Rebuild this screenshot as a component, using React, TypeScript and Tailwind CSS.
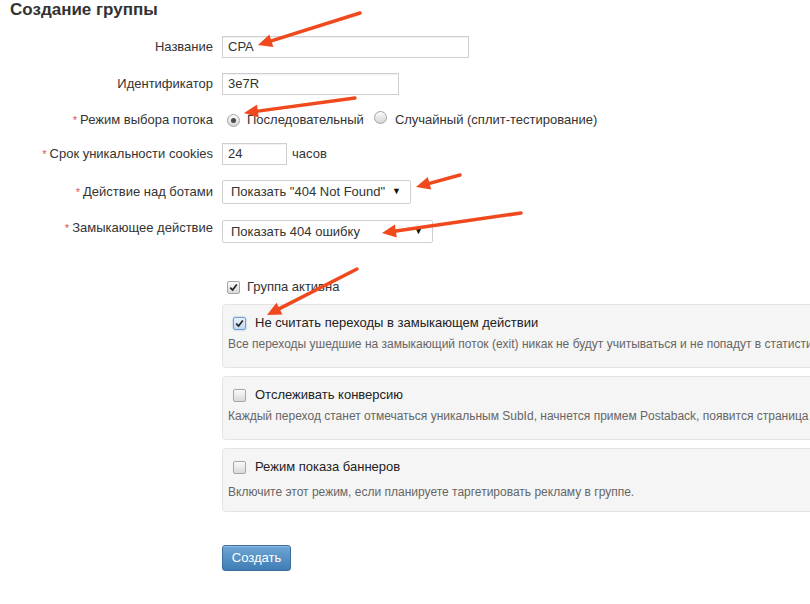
import React from "react";

function Checkbox({ checked, focused }: { checked?: boolean; focused?: boolean }) {
  return (
    <span
      className={
        "relative inline-flex h-[13px] w-[13px] shrink-0 items-center justify-center rounded-[2px] border " +
        (focused
          ? "border-[#6f9fd8] bg-gradient-to-b from-[#e9f1fb] to-[#c3d7f0] shadow-[0_0_2px_#8ab4e6]"
          : "border-[#a6a6a6] bg-gradient-to-b from-[#fafafa] to-[#d9d9d9]")
      }
    >
      {checked && (
        <svg width="9" height="9" viewBox="0 0 9 9">
          <path d="M1.2 4.6 L3.6 7 L7.8 1.6" fill="none" stroke="#222" strokeWidth="1.7" />
        </svg>
      )}
    </span>
  );
}

function Radio({ checked }: { checked?: boolean }) {
  return (
    <span className="inline-flex h-[13px] w-[13px] shrink-0 items-center justify-center rounded-full border border-[#a3a3a3] bg-gradient-to-b from-[#fbfbfb] to-[#d6d6d6]">
      {checked && <span className="h-[5px] w-[5px] rounded-full bg-[#4a4a4a]" />}
    </span>
  );
}

function Label({ text, required }: { text: string; required?: boolean }) {
  return (
    <div className="w-[213px] shrink-0 text-right leading-[16px]">
      {required && <span className="mr-[3px] text-[11px] text-[#d9534f]">*</span>}
      {text}
    </div>
  );
}

function Select({ value, width }: { value: string; width: string }) {
  return (
    <div
      className={
        "flex h-full items-center justify-between rounded-[2px] border border-[#cfcfcf] bg-white pl-[8px] pr-[9px] " +
        width
      }
    >
      <span>{value}</span>
      <span className="text-[9px] text-[#111]">▼</span>
    </div>
  );
}

function Panel({
  title,
  text,
  checked,
  focused,
  loose,
}: {
  title: string;
  text: string;
  checked?: boolean;
  focused?: boolean;
  loose?: boolean;
}) {
  return (
    <div className="h-[64px] w-[640px] rounded-[4px] border border-[#e3e3e3] bg-[#f5f5f5] pl-[5px] pt-[10px]">
      <div className="flex h-[16px] items-center pl-[5px]">
        <Checkbox checked={checked} focused={focused} />
        <span className="ml-[9px] text-[13px] leading-[16px] text-[#222]">{title}</span>
      </div>
      <div className={(loose ? "mt-[9px] " : "mt-[5px] ") + "whitespace-nowrap text-[12px] leading-[16px] text-[#666]"}>
        {text}
      </div>
    </div>
  );
}

function Arrow({ x1, y1, x2, y2 }: { x1: number; y1: number; x2: number; y2: number }) {
  const a = Math.atan2(y2 - y1, x2 - x1);
  const len = 14;
  const w = 6.5;
  const bx = x2 - len * Math.cos(a);
  const by = y2 - len * Math.sin(a);
  const px = -Math.sin(a) * w;
  const py = Math.cos(a) * w;
  return (
    <g>
      <line x1={x1} y1={y1} x2={bx} y2={by} stroke="#f0491d" strokeWidth="3.5" strokeLinecap="round" />
      <polygon points={`${x2},${y2} ${bx + px},${by + py} ${bx - px},${by - py}`} fill="#f0491d" />
    </g>
  );
}

export default function App() {
  return (
    <div className="relative h-[604px] w-[810px] overflow-hidden bg-white font-['Liberation_Sans',Arial,sans-serif] text-[13px] text-[#333]">
      <div className="pl-[10px] text-[17px] font-bold leading-[19px] text-[#333]">Создание группы</div>

      <div className="flex flex-col">
        <div className="mt-[17px] flex h-[22px] items-center">
          <Label text="Название" />
          <div className="ml-[9px] flex h-full w-[247px] items-center border border-[#cfcfcf] pl-[5px] shadow-[inset_0_1px_1px_rgba(0,0,0,0.06)]">CPA</div>
        </div>

        <div className="mt-[15px] flex h-[22px] items-center">
          <Label text="Идентификатор" />
          <div className="ml-[9px] flex h-full w-[177px] items-center border border-[#cfcfcf] pl-[5px] shadow-[inset_0_1px_1px_rgba(0,0,0,0.06)]">3e7R</div>
        </div>

        <div className="mt-[17px] flex h-[16px] items-center">
          <Label text="Режим выбора потока" required />
          <div className="ml-[14px] flex items-center">
            <Radio checked />
            <span className="ml-[7px]">Последовательный</span>
            <span className="ml-[10px]">
              <Radio />
            </span>
            <span className="ml-[8px]">Случайный (сплит-тестирование)</span>
          </div>
        </div>

        <div className="mt-[15px] flex h-[22px] items-center">
          <Label text="Срок уникальности cookies" required />
          <div className="ml-[9px] flex h-full w-[65px] items-center border border-[#cfcfcf] pl-[5px] shadow-[inset_0_1px_1px_rgba(0,0,0,0.06)]">24</div>
          <span className="ml-[5px]">часов</span>
        </div>

        <div className="mt-[15px] flex h-[24px] items-center">
          <Label text="Действие над ботами" required />
          <div className="ml-[9px] h-full">
            <Select value={'Показать "404 Not Found"'} width="w-[189px]" />
          </div>
        </div>

        <div className="mt-[16px] flex h-[23px] items-start">
          <Label text="Замыкающее действие" required />
          <div className="ml-[9px] h-full">
            <Select value="Показать 404 ошибку" width="w-[211px]" />
          </div>
        </div>

        <div className="mt-[36px] flex h-[16px] items-center pl-[227px]">
          <Checkbox checked />
          <span className="ml-[7px]">Группа активна</span>
        </div>

        <div className="mt-[9px] flex flex-col gap-[8px] pl-[222px]">
          <Panel
            checked
            focused
            title="Не считать переходы в замыкающем действии"
            text="Все переходы ушедшие на замыкающий поток (exit) никак не будут учитываться и не попадут в статистику."
          />
          <Panel
            title="Отслеживать конверсию"
            text="Каждый переход станет отмечаться уникальным SubId, начнется примем Postaback, появится страница конверсий."
          />
          <Panel
            loose
            title="Режим показа баннеров"
            text="Включите этот режим, если планируете таргетировать рекламу в группе."
          />
        </div>

        <div className="mt-[33px] pl-[222px]">
          <button className="h-[26px] w-[69px] rounded-[3px] border border-[#3b6e9c] bg-gradient-to-b from-[#6ea6d6] to-[#3f7db4] text-[13px] text-white shadow-[inset_0_1px_0_rgba(255,255,255,0.25)]">
            Создать
          </button>
        </div>
      </div>

      <svg className="pointer-events-none absolute inset-0" width="810" height="604">
        <Arrow x1={360} y1={13} x2={258} y2={45} />
        <Arrow x1={355} y1={98} x2={244} y2={113} />
        <Arrow x1={460} y1={175} x2={416} y2={187} />
        <Arrow x1={521} y1={213} x2={382} y2={233} />
        <Arrow x1={357} y1={269} x2={267} y2={315} />
      </svg>
    </div>
  );
}
